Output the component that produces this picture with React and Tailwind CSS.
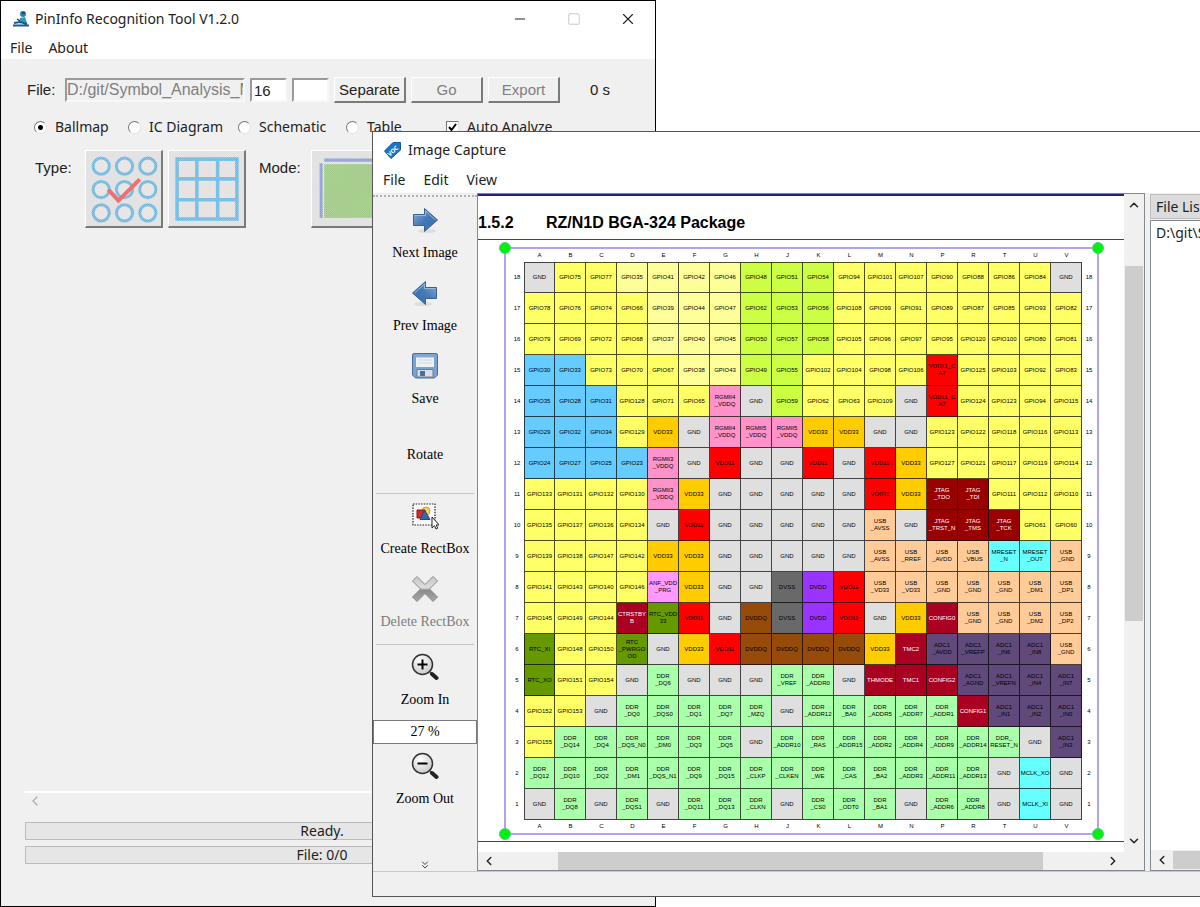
import React from 'react';
import { Minus, Square, X, ChevronLeft, ChevronRight, ChevronUp, ChevronDown, ChevronsDown } from 'lucide-react';
import clsx from 'clsx';

const TONES = {
  g: 'bg-[#dfdfdf]',
  y: 'bg-[#ffff66]',
  p: 'bg-[#ffff99]',
  l: 'bg-[#ccff44]',
  b: 'bg-[#66ccff]',
  k: 'bg-[#ff93c9]',
  o: 'bg-[#ffcc00]',
  r: 'bg-[#ff0000]',
  d: 'bg-[#990000] text-white',
  c: 'bg-[#aa0022] text-white',
  u: 'bg-[#ffcc99]',
  t: 'bg-[#66ffff]',
  m: 'bg-[#ff99ff]',
  s: 'bg-[#696969]',
  v: 'bg-[#9933ff]',
  w: 'bg-[#964b0a]',
  e: 'bg-[#669900]',
  a: 'bg-[#604a7b]',
  n: 'bg-[#aaffaa]',
};

const COLUMNS = 'A B C D E F G H J K L M N P R T U V'.split(' ');

// tone:label, "|" breaks the label; rows run from 18 down to 1
const BALLS = [
  'g:GND y:GPIO75 y:GPIO77 p:GPIO35 p:GPIO41 p:GPIO42 p:GPIO46 l:GPIO48 l:GPIO51 l:GPIO54 y:GPIO94 y:GPIO101 y:GPIO107 y:GPIO90 y:GPIO88 y:GPIO86 y:GPIO84 g:GND',
  'y:GPIO78 y:GPIO76 y:GPIO74 y:GPIO66 p:GPIO39 p:GPIO44 p:GPIO47 l:GPIO62 l:GPIO53 l:GPIO56 y:GPIO108 y:GPIO99 y:GPIO91 y:GPIO89 y:GPIO87 y:GPIO85 y:GPIO93 y:GPIO82',
  'y:GPIO79 y:GPIO69 y:GPIO72 y:GPIO68 p:GPIO37 p:GPIO40 p:GPIO45 l:GPIO50 l:GPIO57 l:GPIO58 y:GPIO105 y:GPIO96 y:GPIO97 y:GPIO95 y:GPIO120 y:GPIO100 y:GPIO80 y:GPIO81',
  'b:GPIO30 b:GPIO33 y:GPIO73 y:GPIO70 y:GPIO67 p:GPIO38 p:GPIO43 l:GPIO49 l:GPIO55 y:GPIO102 y:GPIO104 y:GPIO98 y:GPIO106 r:VDD11_C|A7 y:GPIO125 y:GPIO103 y:GPIO92 y:GPIO83',
  'b:GPIO35 b:GPIO28 b:GPIO31 y:GPIO128 y:GPIO71 y:GPIO65 k:RGMII4|_VDDQ g:GND l:GPIO59 y:GPIO62 y:GPIO63 y:GPIO109 g:GND r:VDD11_C|A7 y:GPIO124 y:GPIO123 y:GPIO94 y:GPIO115',
  'b:GPIO29 b:GPIO32 b:GPIO34 y:GPIO129 o:VDD33 g:GND k:RGMII4|_VDDQ k:RGMII5|_VDDQ k:RGMII5|_VDDQ o:VDD33 o:VDD33 g:GND g:GND y:GPIO123 y:GPIO122 y:GPIO118 y:GPIO116 y:GPIO113',
  'b:GPIO24 b:GPIO27 b:GPIO25 b:GPIO23 k:RGMII3|_VDDQ g:GND r:VDD11 g:GND g:GND r:VDD11 g:GND r:VDD11 o:VDD33 y:GPIO127 y:GPIO121 y:GPIO117 y:GPIO119 y:GPIO114',
  'y:GPIO133 y:GPIO131 y:GPIO132 y:GPIO130 k:RGMII3|_VDDQ o:VDD33 g:GND g:GND g:GND g:GND g:GND r:VDD11 o:VDD33 d:JTAG|_TDO d:JTAG|_TDI y:GPIO111 y:GPIO112 y:GPIO110',
  'y:GPIO135 y:GPIO137 y:GPIO136 y:GPIO134 g:GND r:VDD11 g:GND g:GND g:GND g:GND g:GND u:USB|_AVSS g:GND d:JTAG|_TRST_N d:JTAG|_TMS d:JTAG|_TCK y:GPIO61 y:GPIO60',
  'y:GPIO139 y:GPIO138 y:GPIO147 y:GPIO142 o:VDD33 o:VDD33 g:GND g:GND g:GND g:GND g:GND u:USB|_AVSS u:USB|_RREF u:USB|_AVDD u:USB|_VBUS t:MRESET|_N t:MRESET|_OUT u:USB|_GND',
  'y:GPIO141 y:GPIO143 y:GPIO140 y:GPIO146 m:ANF_VDD|_PRG o:VDD33 g:GND g:GND s:DVSS v:DVDD r:VDD11 u:USB|_VD33 u:USB|_VD33 u:USB|_GND u:USB|_GND u:USB|_GND u:USB|_DM1 u:USB|_DP1',
  'y:GPIO145 y:GPIO149 y:GPIO144 c:CTRSTBY|B e:RTC_VDD|33 r:VDD11 g:GND w:DVDDQ s:DVSS v:DVDD r:VDD11 g:GND o:VDD33 c:CONFIG0 u:USB|_GND u:USB|_GND u:USB|_DM2 u:USB|_DP2',
  'e:RTC_XI y:GPIO148 y:GPIO150 e:RTC|_PWRGO|OD g:GND o:VDD33 r:VDD11 w:DVDDQ w:DVDDQ w:DVDDQ w:DVDDQ o:VDD33 c:TMC2 a:ADC1|_AVDD a:ADC1|_VREFP a:ADC1|_IN6 a:ADC1|_IN8 u:USB|_GND',
  'e:RTC_XO y:GPIO151 y:GPIO154 g:GND n:DDR|_DQ6 g:GND g:GND g:GND n:DDR|_VREF n:DDR|_ADDR0 g:GND c:THMODE c:TMC1 c:CONFIG2 a:ADC1|_AGND a:ADC1|_VREFN a:ADC1|_IN4 a:ADC1|_IN7',
  'y:GPIO152 y:GPIO153 g:GND n:DDR|_DQ0 n:DDR|_DQS0 n:DDR|_DQ1 n:DDR|_DQ7 n:DDR|_MZQ g:GND n:DDR|_ADDR12 n:DDR|_BA0 n:DDR|_ADDR5 n:DDR|_ADDR7 n:DDR|_ADDR1 c:CONFIG1 a:ADC1|_IN1 a:ADC1|_IN2 a:ADC1|_IN0',
  'y:GPIO155 n:DDR|_DQ14 n:DDR|_DQ4 n:DDR|_DQS_N0 n:DDR|_DM0 n:DDR|_DQ3 n:DDR|_DQ5 g:GND n:DDR|_ADDR10 n:DDR|_RAS n:DDR|_ADDR15 n:DDR|_ADDR2 n:DDR|_ADDR4 n:DDR|_ADDR9 n:DDR|_ADDR14 n:DDR_|RESET_N g:GND a:ADC1|_IN3',
  'n:DDR|_DQ12 n:DDR|_DQ10 n:DDR|_DQ2 n:DDR|_DM1 n:DDR|_DQS_N1 n:DDR|_DQ9 n:DDR|_DQ15 n:DDR|_CLKP n:DDR|_CLKEN n:DDR|_WE n:DDR|_CAS n:DDR|_BA2 n:DDR|_ADDR3 n:DDR|_ADDR11 n:DDR|_ADDR13 g:GND t:MCLK_XO g:GND',
  'g:GND n:DDR|_DQ8 g:GND n:DDR|_DQS1 g:GND n:DDR|_DQ11 n:DDR|_DQ13 n:DDR|_CLKN g:GND n:DDR|_CS0 n:DDR|_ODT0 n:DDR|_BA1 g:GND n:DDR|_ADDR6 n:DDR|_ADDR8 g:GND t:MCLK_XI g:GND',
].map((row) => row.split(' ').map((cell) => cell.split(':')));

const RAISED = 'bg-[#f0f0f0] border-t border-l border-b-2 border-r-2 border-t-white border-l-white border-b-[#7a7a7a] border-r-[#7a7a7a]';
const SUNKEN = 'border-2 border-t-[#9a9a9a] border-l-[#9a9a9a] border-b-[#f8f8f8] border-r-[#f8f8f8]';

const BlueArrow = ({ flip }) => (
  <svg viewBox="0 0 28 28" className={clsx('w-7 h-7', flip && '-scale-x-100')}>
    <defs>
      <linearGradient id="arrowFill" x1="0" y1="0" x2="1" y2="1">
        <stop offset="0" stopColor="#8fb2d9" />
        <stop offset="0.5" stopColor="#4478b5" />
        <stop offset="1" stopColor="#3a6ca8" />
      </linearGradient>
    </defs>
    <ellipse cx="16" cy="25" rx="9" ry="2" fill="#000" opacity="0.08" />
    <path d="M2.5 8.500h11V2.500L26.500 14 13.500 25.500v-6h-11z" fill="url(#arrowFill)" stroke="#3a5f92" />
    <path d="M3.500 9.500h11V5L24.500 14" fill="none" stroke="#a9c4e4" opacity="0.8" />
  </svg>
);

const Floppy = () => (
  <svg viewBox="0 0 28 28" className="w-7 h-7">
    <path d="M3 1.500h22a1.500 1.500 0 0 1 1.500 1.500v20l-3 3H4.500l-3-3V3A1.500 1.500 0 0 1 3 1.500z" fill="#7ba3d1" stroke="#4a6f9f" />
    <path d="M5 3h18v12H5z" fill="#eef1f5" />
    <path d="M5 3h18v2.500H5z" fill="#86a9d1" />
    <path d="M7 8h14M7 11h14" stroke="#d3d7dc" />
    <path d="M6 17.500h16V25H6z" fill="#dcdfe2" stroke="#6a7c92" />
    <path d="M9 19h5v5H9z" fill="#4a6f9c" />
  </svg>
);

const RectPick = () => (
  <svg viewBox="0 0 28 28" className="w-7 h-7">
    <path d="M2 2h22v21H2z" fill="#fafafa" stroke="#222" strokeWidth="1.200" strokeDasharray="1.500 1.200" />
    <circle cx="15" cy="9" r="4" fill="#f3d35e" stroke="#c9a227" />
    <path d="M6 8h8v8H6z" fill="#d42a2a" stroke="#8e1515" />
    <path d="M13.500 8l5.500 9.500H9z" fill="#3767ab" stroke="#234a85" />
    <path d="M21 15v11l2.500-2.300 1.500 3.300 1.700-.8-1.500-3.200h3z" fill="#fff" stroke="#222" strokeWidth="1" />
  </svg>
);

const GreyCross = () => (
  <svg viewBox="0 0 28 28" className="w-7 h-7">
    <defs>
      <linearGradient id="crossFill" x1="0" y1="0" x2="0" y2="1">
        <stop offset="0" stopColor="#c8c8c8" />
        <stop offset="0.45" stopColor="#dcdcdc" />
        <stop offset="0.55" stopColor="#8c8c8c" />
        <stop offset="1" stopColor="#a8a8a8" />
      </linearGradient>
    </defs>
    <path d="M6 1.500l8 8 8-8L26.500 6l-8 8 8 8-4.500 4.500-8-8-8 8L1.500 22l8-8-8-8z" fill="url(#crossFill)" stroke="#8a8a8a" strokeLinejoin="round" />
  </svg>
);

const Lens = ({ plus }) => (
  <svg viewBox="0 0 28 28" className="w-7 h-7">
    <defs>
      <radialGradient id="lensFill" cx="0.4" cy="0.3" r="0.8">
        <stop offset="0" stopColor="#fff" />
        <stop offset="1" stopColor="#c4c4c4" />
      </radialGradient>
    </defs>
    <path d="M19 19l2 2" stroke="#555" strokeWidth="2" />
    <path d="M21 21l4.500 4" stroke="#222" strokeWidth="4" strokeLinecap="round" />
    <circle cx="11.500" cy="11.500" r="10" fill="url(#lensFill)" stroke="#333" strokeWidth="1.500" />
    <path d="M6.500 11.500h10" stroke="#000" strokeWidth="2" />
    {plus && <path d="M11.500 6.500v10" stroke="#000" strokeWidth="2" />}
  </svg>
);

const Dither = ({ id }) => (
  <defs>
    <pattern id={id} width="2" height="2" patternUnits="userSpaceOnUse">
      <path d="M0 0h1v1H0zM1 1h1v1H1z" fill="#f0f0f0" fillOpacity="0.45" />
    </pattern>
  </defs>
);

const BallsPicture = () => (
  <svg viewBox="0 0 74 74" className="w-full h-full">
    <Dither id="ditherBalls" />
    <rect width="74" height="74" fill="#e0dfe0" />
    {[15, 38, 61].map((y) => [15, 38, 61].map((x) => (
      <circle key={`${x}-${y}`} cx={x} cy={y} r="8" fill="#e6e3e3" stroke="#5db0dc" strokeWidth="3" />
    )))}
    <path d="M22 38l10 11 21-21" fill="none" stroke="#f04a4a" strokeWidth="4" />
    <rect width="74" height="74" fill="url(#ditherBalls)" />
  </svg>
);

const GridPicture = () => (
  <svg viewBox="0 0 74 74" className="w-full h-full">
    <Dither id="ditherGrid" />
    <rect width="74" height="74" fill="#e0dfe0" />
    <path d="M8 8h59v59H8zM27.500 8v59M48 8v59M8 27.500h59M8 48h59" fill="#e6e0e0" stroke="#58b4e2" strokeWidth="3.500" />
    <rect width="74" height="74" fill="url(#ditherGrid)" />
  </svg>
);

const ModePicture = () => (
  <svg viewBox="0 0 74 74" className="w-full h-full">
    <Dither id="ditherMode" />
    <rect width="74" height="74" fill="#e0dfe0" />
    <path d="M12 9h62" stroke="#7f93d0" strokeWidth="3" />
    <path d="M9 12v54" stroke="#7f93d0" strokeWidth="3" />
    <rect x="12" y="13" width="62" height="53" fill="#93c572" />
    <rect width="74" height="74" fill="url(#ditherMode)" />
  </svg>
);

const ModeRadio = ({ label, checked, className }) => (
  <label className={clsx('flex items-center gap-2', className)}>
    <input
      type="radio"
      name="kind"
      defaultChecked={checked}
      className="appearance-none w-[13px] h-[13px] rounded-full bg-white border border-t-[#777] border-l-[#777] border-b-[#e3e3e3] border-r-[#e3e3e3] checked:bg-[radial-gradient(circle,#000_0_2px,#fff_3px)]"
    />
    {label}
  </label>
);

const ToolButton = ({ icon, label, disabled }) => (
  <button disabled={disabled} className={clsx('h-[73px] shrink-0 w-full pt-2 flex flex-col items-center gap-[10px] whitespace-nowrap', disabled && 'text-[#7c7c7c]')}>
    {icon}
    <span className="leading-[18px]">{label}</span>
  </button>
);

const MainWindow = () => (
  <section className="absolute left-0 top-0 w-[656px] h-full bg-[#f0f0f0] border border-black flex flex-col">
    <header className="h-[35px] shrink-0 bg-white flex items-center pl-[11px]">
      <svg viewBox="0 0 18 18" className="w-[18px] h-[18px]">
        <circle cx="11" cy="4" r="3" fill="#2b7fb4" />
        <path d="M8 8l5-1 2 6H7z" fill="#2b9bb8" />
        <path d="M1 15.500h16M2 13l6-1 7 2" stroke="#1b5c94" strokeWidth="2" fill="none" />
        <path d="M10 3h3M5 9l3 2" stroke="#123f70" strokeWidth="1.500" />
      </svg>
      <h1 className="ml-[5px] flex-1">PinInfo Recognition Tool V1.2.0</h1>
      <button aria-label="Minimize" className="w-[54px] grid place-items-center"><Minus size={16} strokeWidth={1.500} /></button>
      <button aria-label="Maximize" className="w-[54px] grid place-items-center text-[#c4c4c4]"><Square size={14} strokeWidth={1.500} /></button>
      <button aria-label="Close" className="w-[54px] grid place-items-center"><X size={18} strokeWidth={1.500} /></button>
    </header>
    <nav className="h-[23px] shrink-0 bg-white flex items-center gap-4 pl-[9px]">
      <button>File</button>
      <button>About</button>
    </nav>

    <div className="flex-1 flex flex-col px-6 pt-[18px]">
      <div className="flex items-center h-[26px] font-['Liberation_Sans',sans-serif] text-[15px]">
        <label htmlFor="path" className="w-10 pl-[2px]">File:</label>
        <input id="path" disabled defaultValue="D:/git/Symbol_Analysis_Map" className={clsx('w-[180px] h-6 text-base bg-[#f0f0f0] text-[#808080]', SUNKEN)} />
        <input aria-label="Columns" defaultValue="16" className={clsx('ml-[5px] w-[37px] h-6 pl-[2px] bg-white', SUNKEN)} />
        <input aria-label="Rows" defaultValue="" className={clsx('ml-[5px] w-[37px] h-6 bg-white', SUNKEN)} />
        <button className={clsx('ml-[5px] w-[72px] h-[26px]', RAISED)}>Separate</button>
        <button disabled className={clsx('ml-[5px] w-[72px] h-[26px] text-[#7f7f7f]', RAISED)}>Go</button>
        <button disabled className={clsx('ml-[5px] w-[72px] h-[26px] text-[#7f7f7f]', RAISED)}>Export</button>
        <span className="ml-[30px]">0 s</span>
      </div>

      <div className="flex items-center h-5 mt-[14px] pl-[9px] whitespace-nowrap">
        <ModeRadio label="Ballmap" checked className="w-[94px]" />
        <ModeRadio label="IC Diagram" className="w-[110px]" />
        <ModeRadio label="Schematic" className="w-[108px]" />
        <ModeRadio label="Table" className="w-[100px]" />
        <label className="flex items-center gap-2">
          <span className="relative grid place-items-center">
            <input type="checkbox" defaultChecked className="peer appearance-none w-[13px] h-[13px] bg-white border border-t-[#777] border-l-[#777] border-b-[#e3e3e3] border-r-[#e3e3e3]" />
            <svg viewBox="0 0 13 13" className="absolute inset-0 hidden peer-checked:block pointer-events-none">
              <path d="M3 6l2.500 3L10 3" fill="none" stroke="#000" strokeWidth="2" />
            </svg>
          </span>
          Auto Analyze
        </label>
      </div>

      <div className="flex mt-[13px] font-['Liberation_Sans',sans-serif] text-[15px]">
        <span className="w-[60px] pl-[10px] pt-2">Type:</span>
        <button aria-label="Ball type" className={clsx('w-[78px] h-[78px]', RAISED)}><BallsPicture /></button>
        <button aria-label="Grid type" className={clsx('ml-[5px] w-[78px] h-[78px]', RAISED)}><GridPicture /></button>
        <span className="w-[65px] pl-[13px] pt-2">Mode:</span>
        <button aria-label="Region mode" className={clsx('w-[78px] h-[78px]', RAISED)}><ModePicture /></button>
      </div>

      <div className="mt-auto border-t-2 border-white h-[18px] flex items-center text-[#b4b4b4]">
        <ChevronLeft size={16} strokeWidth={2.500} className="ml-[2px]" />
      </div>
      <div className="mt-[13px] h-[18px] w-[594px] border border-[#bcbcbc] bg-[#e6e6e6] flex items-center justify-center">Ready.</div>
      <div className="mt-[6px] mb-[42px] h-[18px] w-[594px] border border-[#bcbcbc] bg-[#e6e6e6] flex items-center justify-center">File: 0/0</div>
    </div>
  </section>
);

const BallTable = () => {
  const letters = (
    <tr>
      <th className="w-[14px]" />
      {COLUMNS.map((c) => <th key={c} className="w-[31px] h-[13px] font-normal">{c}</th>)}
      <th className="w-[14px]" />
    </tr>
  );

  return (
    <table className="table-fixed w-[586px] border-separate border-spacing-0 font-['Liberation_Sans',sans-serif] text-[6px] leading-[7px] text-center text-black">
      <thead>{letters}</thead>
      <tbody>
        {BALLS.map((row, i) => (
          <tr key={i}>
            <th className="font-normal">{18 - i}</th>
            {row.map(([tone, text], j) => (
              <td
                key={j}
                className={clsx(
                  'h-[31px] p-0 border-r border-b border-black/70 whitespace-pre',
                  i === 0 && 'border-t',
                  j === 0 && 'border-l',
                  TONES[tone]
                )}
              >
                {text.replaceAll('|', '\n')}
              </td>
            ))}
            <th className="font-normal">{18 - i}</th>
          </tr>
        ))}
      </tbody>
      <tfoot>{letters}</tfoot>
    </table>
  );
};

const HANDLES = ['-left-[7px] -top-[7px]', '-right-[7px] -top-[7px]', '-left-[7px] -bottom-[7px]', '-right-[7px] -bottom-[7px]'];

const Viewer = () => (
  <div className="w-[668px] shrink-0 border border-[#828790] flex flex-col">
    <div className="flex-1 min-h-0 flex">
      <div className="flex-1 min-w-0 overflow-hidden bg-white border-t-2 border-[#20208a]">
        <h2 className="h-[44px] pt-[11px] flex items-center border-b border-[#444] font-['Liberation_Sans',sans-serif] font-bold text-base text-black">
          <span className="w-[68px]">1.5.2</span>
          RZ/N1D BGA-324 Package
        </h2>
        <div className="relative mt-[7px] mb-[6px] ml-[26px] w-[595px] border-2 border-[#aea5ee] pl-1">
          <BallTable />
          {HANDLES.map((h) => <span key={h} className={clsx('absolute w-3 h-3 rounded-full bg-[#00f010] border border-[#5cc98a]', h)} />)}
        </div>
        <div className="border-t border-[#444]" />
      </div>
      <div className="w-5 shrink-0 bg-[#f0f0f0] flex flex-col items-center">
        <ChevronUp size={14} strokeWidth={2.500} className="mt-1" />
        <div className="mt-[54px] w-[18px] h-[355px] bg-[#cdcdcd]" />
        <ChevronDown size={14} strokeWidth={2.500} className="mt-auto mb-1" />
      </div>
    </div>
    <div className="h-[18px] shrink-0 bg-[#f0f0f0] flex items-center pr-5">
      <ChevronLeft size={14} strokeWidth={2.500} className="ml-1" />
      <div className="ml-[62px] w-[485px] h-full bg-[#cdcdcd]" />
      <ChevronRight size={14} strokeWidth={2.500} className="ml-auto mr-1" />
    </div>
  </div>
);

const CaptureWindow = () => (
  <section className="absolute left-[372px] -right-[160px] top-[131px] bottom-[10px] bg-[#f0f0f0] border border-[#555] flex flex-col">
    <header className="h-[35px] shrink-0 bg-white flex items-center pl-[11px]">
      <svg viewBox="0 0 18 18" className="w-[18px] h-[18px]">
        <path d="M9 1.500h7.500V9L7 17.500 0.500 10z" fill="#1b75c4" stroke="#12589a" strokeLinejoin="round" />
        <text x="9" y="12" fontSize="6" fontWeight="bold" fill="#fff" textAnchor="middle" transform="rotate(-42 9 10)">VOC</text>
      </svg>
      <h2 className="ml-[6px]">Image Capture</h2>
    </header>
    <nav className="h-[26px] shrink-0 bg-white flex items-center gap-[18px] pl-[10px]">
      <button>File</button>
      <button>Edit</button>
      <button>View</button>
    </nav>

    <div className="flex-1 min-h-0 flex">
      <aside className="w-[104px] shrink-0 flex flex-col items-center pt-[2px] text-black font-['Liberation_Serif',serif] text-[14px]">
        <div className="w-full h-[3px] border-t-2 border-dotted border-[#b4b4b4]" />
        <ToolButton icon={<BlueArrow />} label="Next Image" />
        <ToolButton icon={<BlueArrow flip />} label="Prev Image" />
        <ToolButton icon={<Floppy />} label="Save" />
        <button className="h-[76px] shrink-0">Rotate</button>
        <div className="w-[98px] border-t border-[#c6c6c6]" />
        <ToolButton icon={<RectPick />} label="Create RectBox" />
        <ToolButton icon={<GreyCross />} label="Delete RectBox" disabled />
        <div className="w-[98px] mt-1 border-t border-[#c6c6c6]" />
        <ToolButton icon={<Lens plus />} label="Zoom In" />
        <input aria-label="Zoom" defaultValue="27 %" className="w-full mt-[2px] h-6 shrink-0 bg-white border border-[#7a7a7a] text-center" />
        <ToolButton icon={<Lens />} label="Zoom Out" />
        <ChevronsDown size={12} className="mt-auto text-[#444]" />
      </aside>
      <Viewer />
      <aside className="ml-[5px] flex-1 min-w-0 flex flex-col">
        <h3 className="h-[25px] mt-px shrink-0 pl-[5px] flex items-center bg-[#dcdcdc] border border-[#bdbdbd]">File List</h3>
        <div className="mt-px flex-1 flex flex-col bg-white border border-[#828790]">
          <p className="pl-[5px] leading-6">D:\git\Symbol_Analysis</p>
          <div className="mt-auto h-5 bg-[#f0f0f0] flex items-center">
            <ChevronLeft size={14} strokeWidth={2.500} className="ml-1" />
            <div className="ml-1 w-[120px] h-[18px] bg-[#cdcdcd]" />
          </div>
        </div>
      </aside>
    </div>
    <footer className="h-[25px] shrink-0 border-t border-[#c8c8c8]" />
  </section>
);

const App = () => (
  <main className="relative min-h-screen overflow-hidden bg-white font-['Noto_Sans','Open_Sans',sans-serif] text-[14px] leading-5 text-[#222]">
    <MainWindow />
    <CaptureWindow />
  </main>
);

export default App;
